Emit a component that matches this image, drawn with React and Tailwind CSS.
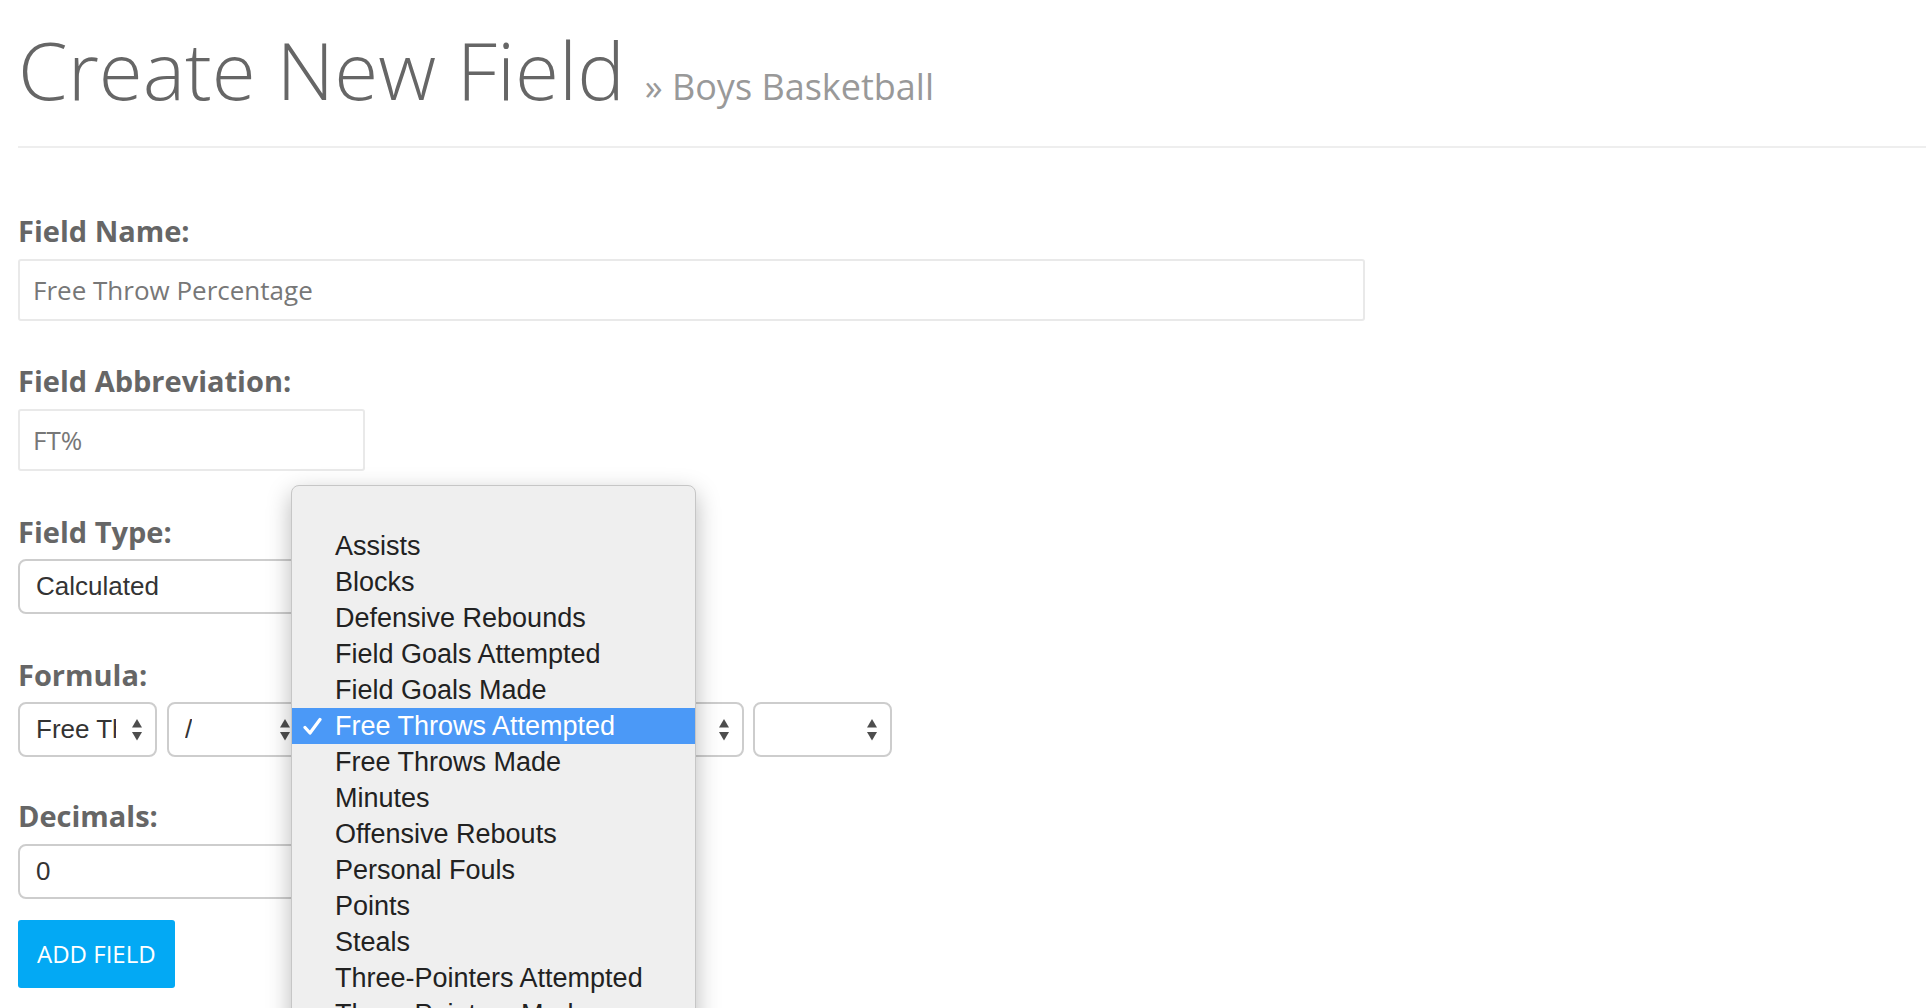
import { useState } from "react";

const statOptions = [
    "",
    "Assists",
    "Blocks",
    "Defensive Rebounds",
    "Field Goals Attempted",
    "Field Goals Made",
    "Free Throws Attempted",
    "Free Throws Made",
    "Minutes",
    "Offensive Rebouts",
    "Personal Fouls",
    "Points",
    "Steals",
    "Three-Pointers Attempted",
    "Three-Pointers Made",
];

function Arrows() {
    return (
        <svg width="10" height="22" viewBox="0 0 10 22" className="shrink-0 ml-auto">
            <polygon points="5,0 10,8.5 0,8.5" fill="#4d4d4d" />
            <polygon points="0,13 10,13 5,21.5" fill="#4d4d4d" />
        </svg>
    );
}

function MacSelect({ value, className = "", textClass = "", children }) {
    return (
        <div className={`relative h-[55px] rounded-[8px] border-2 border-[#cdcdcd] bg-white flex items-center pl-4 pr-[13px] font-['Liberation_Sans',Arial,sans-serif] text-[26px] text-[#333] ${className}`}>
            <div className={`overflow-hidden whitespace-nowrap ${textClass}`}>{value}</div>
            <Arrows />
            {children}
        </div>
    );
}

function Label({ children }) {
    return (
        <div className="text-[29px] leading-[40px] font-bold text-[#666]">{children}</div>
    );
}

function Popup() {
    return (
        <div className="absolute -top-[219px] -left-[25px] w-[405px] h-[620px] rounded-[8px] border border-[#c6c6c6] bg-[#efefef] shadow-[0_8px_24px_rgba(0,0,0,0.28)] pt-[6px] z-10">
            {statOptions.map((opt, i) => {
                const sel = opt === "Free Throws Attempted";
                return (
                    <div
                        key={i}
                        className={`h-[36px] flex items-center text-[27px] ${sel ? "bg-[#4b99f7] text-white" : "text-[#222]"}`}
                    >
                        <span className="w-[43px] pl-[11px] flex items-center">
                            {sel && (
                                <svg width="19" height="19" viewBox="0 0 19 19">
                                    <path d="M2 10.5 L7 16 L17 2.5" fill="none" stroke="#fff" strokeWidth="3.2" strokeLinecap="round" strokeLinejoin="round" />
                                </svg>
                            )}
                        </span>
                        <span className="whitespace-nowrap">{opt}</span>
                    </div>
                );
            })}
        </div>
    );
}

export default function App() {
    const [name, setName] = useState("Free Throw Percentage");
    const [abbr, setAbbr] = useState("FT%");

    return (
        <div className="h-[1008px] overflow-hidden bg-white font-['Open_Sans',sans-serif]">
            <div className="pl-[18px]">
                <div className="flex items-baseline gap-[20px] mt-[29px]">
                    <h1 className="text-[80px] leading-none font-light text-[#666] whitespace-nowrap">Create New Field</h1>
                    <span className="text-[36px] text-[#999] whitespace-nowrap">» Boys Basketball</span>
                </div>
                <div className="h-[2px] bg-[#eeeeee] mt-[32px]" />

                <div className="mt-[63px]">
                    <Label>Field Name:</Label>
                    <input
                        value={name}
                        onChange={e => setName(e.target.value)}
                        className="mt-2 block w-[1347px] h-[62px] rounded-[3px] border-2 border-[#e9e9e9] px-[13px] text-[26px] text-[#777] outline-none"
                    />
                </div>

                <div className="mt-[40px]">
                    <Label>Field Abbreviation:</Label>
                    <input
                        value={abbr}
                        onChange={e => setAbbr(e.target.value)}
                        className="mt-2 block w-[347px] h-[62px] rounded-[3px] border-2 border-[#e9e9e9] px-[13px] text-[26px] text-[#777] outline-none"
                    />
                </div>

                <div className="mt-[41px]">
                    <Label>Field Type:</Label>
                    <MacSelect value="Calculated" className="mt-[7px] w-[347px]" />
                </div>

                <div className="mt-[41px]">
                    <Label>Formula:</Label>
                    <div className="mt-[7px] flex gap-[10px]">
                        <MacSelect value="Free Throws Made" className="w-[139px]" textClass="w-[80px]" />
                        <MacSelect value="/" className="w-[138px]" />
                        <MacSelect value="Free Throws Attempted" className="w-[430px] -ml-px" textClass="w-[300px]">
                            <Popup />
                        </MacSelect>
                        <MacSelect value="" className="w-[139px] -ml-px" />
                    </div>
                </div>

                <div className="mt-[39px]">
                    <Label>Decimals:</Label>
                    <div className="mt-[8px] w-[347px] h-[55px] rounded-[8px] border-2 border-[#cdcdcd] flex items-center pl-4 font-['Liberation_Sans',Arial,sans-serif] text-[26px] text-[#333]">
                        0
                    </div>
                </div>

                <button className="mt-[21px] h-[68px] px-[19px] rounded-[3px] bg-[#03a9f4] text-white text-[24px] uppercase">
                    Add Field
                </button>
            </div>
        </div>
    );
}
